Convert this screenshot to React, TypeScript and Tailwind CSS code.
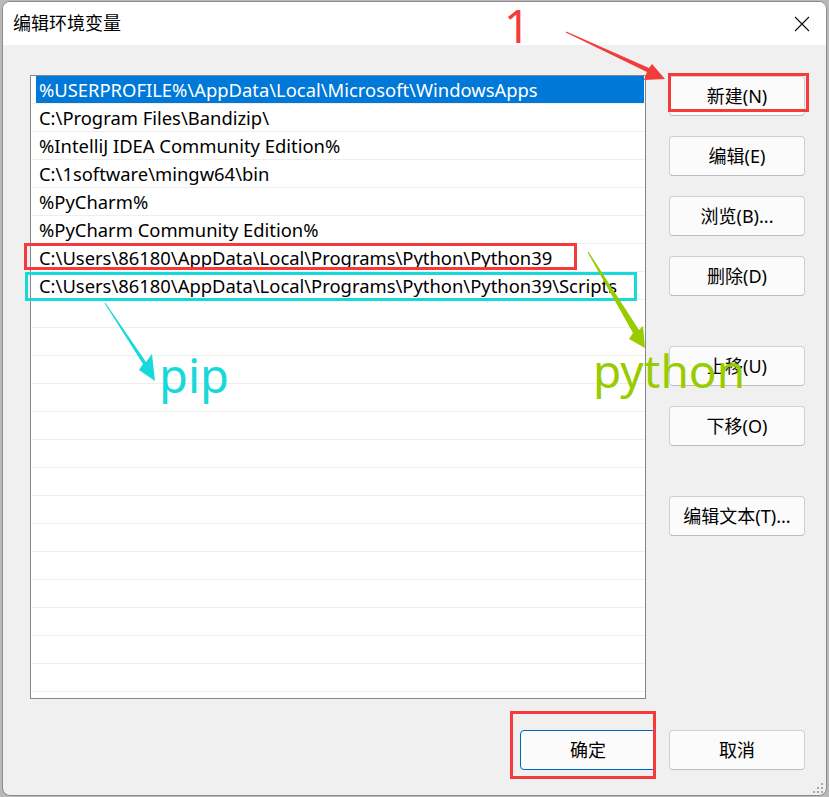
import React from 'react';

const paths = [
  '%USERPROFILE%\\AppData\\Local\\Microsoft\\WindowsApps',
  'C:\\Program Files\\Bandizip\\',
  '%IntelliJ IDEA Community Edition%',
  'C:\\1software\\mingw64\\bin',
  '%PyCharm%',
  '%PyCharm Community Edition%',
  'C:\\Users\\86180\\AppData\\Local\\Programs\\Python\\Python39',
  'C:\\Users\\86180\\AppData\\Local\\Programs\\Python\\Python39\\Scripts',
];

const rows = [...paths, ...Array(15).fill('')];

function Btn({ label, primary = false, className = '' }: { label: string; primary?: boolean; className?: string }) {
  return (
    <button
      className={`w-[136px] h-[40px] rounded-[4px] bg-[#fbfbfb] text-[18px] text-black flex items-center justify-center ${
        primary ? 'border border-[#0067c0]' : 'border border-[#d0d0d0] border-b-[#bdbdbd]'
      } ${className}`}
    >
      {label}
    </button>
  );
}

export default function App() {
  return (
    <div className="relative w-[829px] h-[797px] overflow-hidden bg-[#b9b9b9] pt-[1px] pl-[2px] font-['Noto_Sans','Noto_Sans_CJK_SC',sans-serif]">
      {/* Dialog window */}
      <div className="w-[825px] h-[795px] rounded-[8px] border border-[#8c8c8c] overflow-hidden flex flex-col bg-[#f0f0f0]">
        {/* Title bar */}
        <div className="h-[43px] bg-white flex items-center justify-between pl-[10px] pr-[16px]">
          <span className="text-[18px] text-black">编辑环境变量</span>
          <svg width="16" height="16" viewBox="0 0 16 16">
            <path d="M1 1 L15 15 M15 1 L1 15" stroke="#111" strokeWidth="1.2" />
          </svg>
        </div>

        {/* Body */}
        <div className="flex-1 flex flex-col pt-[30px] pl-[27px] pr-[20px]">
          <div className="flex">
            {/* Path list */}
            <div className="w-[616px] h-[624px] border border-[#828790] bg-white overflow-hidden">
              {rows.map((p, i) => (
                <div key={i} className="h-[28px] ml-[1px] border-b border-[#eeeeee] flex">
                  <div
                    className={`ml-[4px] mr-[1px] flex-1 pl-[3px] pt-[1px] flex items-center text-[18.4px] whitespace-nowrap ${
                      i === 0 ? 'bg-[#0078d7] text-white' : 'text-black'
                    }`}
                  >
                    {p}
                  </div>
                </div>
              ))}
            </div>

            {/* Side buttons */}
            <div className="ml-[23px] mt-[1px] flex flex-col">
              <Btn label="新建(N)" />
              <Btn label="编辑(E)" className="mt-[20px]" />
              <Btn label="浏览(B)..." className="mt-[20px]" />
              <Btn label="删除(D)" className="mt-[20px]" />
              <Btn label="上移(U)" className="mt-[50px]" />
              <Btn label="下移(O)" className="mt-[20px]" />
              <Btn label="编辑文本(T)..." className="mt-[50px]" />
            </div>
          </div>

          {/* Footer buttons */}
          <div className="mt-[31px] flex justify-end gap-[13px] pr-[1px]">
            <Btn label="确定" primary />
            <Btn label="取消" />
          </div>
        </div>
      </div>

      {/* Resize grip */}
      <svg className="absolute left-[813px] top-[783px]" width="12" height="12" viewBox="0 0 12 12">
        <g fill="#a8a8a8">
          <rect x="8" y="0" width="2" height="2" />
          <rect x="4" y="4" width="2" height="2" />
          <rect x="8" y="4" width="2" height="2" />
          <rect x="0" y="8" width="2" height="2" />
          <rect x="4" y="8" width="2" height="2" />
          <rect x="8" y="8" width="2" height="2" />
        </g>
      </svg>

      {/* Annotations */}
      <div className="absolute left-[668px] top-[73px] w-[141px] h-[39px] border-[3px] border-[#f43b3b]" />
      <div className="absolute left-[24px] top-[243px] w-[553px] h-[27px] border-[3px] border-[#f43b3b]" />
      <div className="absolute left-[25px] top-[272px] w-[612px] h-[29px] border-[3px] border-[#17d9d9]" />
      <div className="absolute left-[510px] top-[711px] w-[146px] h-[68px] border-[3px] border-[#f43b3b]" />

      <svg className="absolute left-0 top-0 pointer-events-none" width="829" height="797">
        <polygon
          points="565.8,32.4 647,72 644,80 665,79 652,64 649,68 566.2,31.4"
          fill="#f43b3b"
        />
        <polygon
          points="104.6,303.3 143,364 139,370 155,381 152,354 146,362 105.4,302.7"
          fill="#17d9d9"
        />
        <polygon
          points="587.5,252.3 633,333 629,339 645,348 643,326 639,330 588.5,251.7"
          fill="#99cc00"
        />
      </svg>

      <div className="absolute left-[504px] top-[2px] text-[46px] leading-none text-[#f43b3b] font-['Noto_Sans',sans-serif]">
        1
      </div>
      <div className="absolute left-[159px] top-[352px] text-[47px] leading-none text-[#17d9d9] font-['Noto_Sans',sans-serif]">
        pip
      </div>
      <div className="absolute left-[593px] top-[347px] text-[46px] leading-none text-[#99cc00] font-['Noto_Sans',sans-serif]">
        python
      </div>
    </div>
  );
}
